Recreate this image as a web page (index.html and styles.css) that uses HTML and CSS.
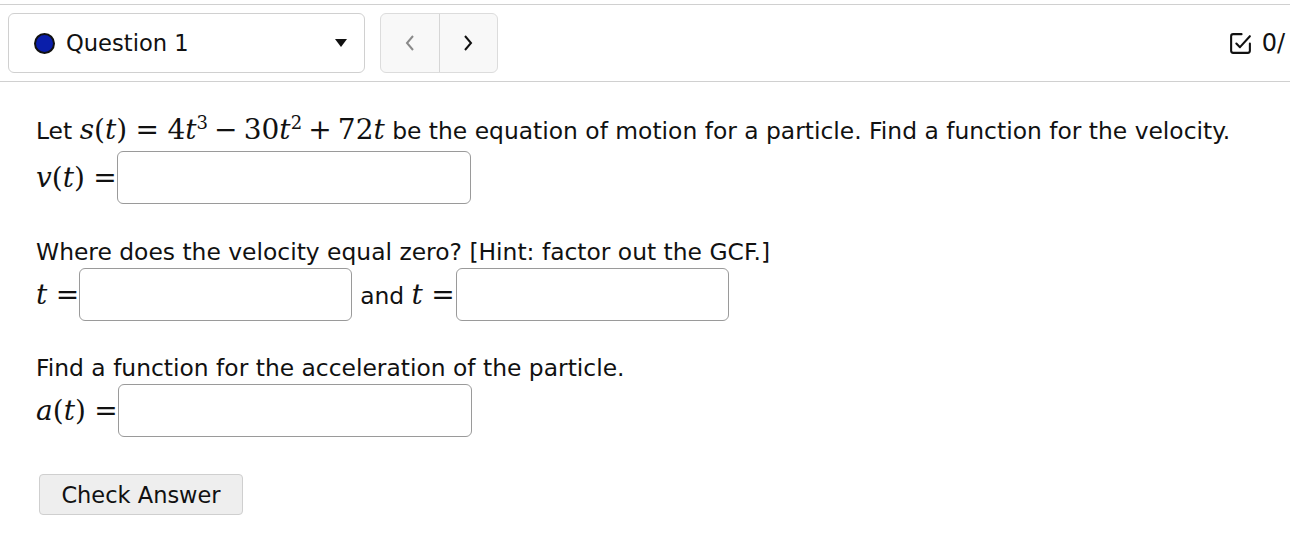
FILE: index.html
```html
<!DOCTYPE html>
<html>
<head>
<meta charset="utf-8">
<link rel="stylesheet" href="styles.css">
</head>
<body>
<div class="header">
  <div class="qselect">
    <span class="dot"></span>
    <span class="qname">Question 1</span>
    <span class="caret"></span>
  </div>
  <div class="nav">
    <div class="navbtn prev">
      <svg width="12" height="20" viewBox="0 0 12 20"><path d="M9 3 L3 10 L9 17" fill="none" stroke="#8a8a8a" stroke-width="2"/></svg>
    </div>
    <div class="navbtn next">
      <svg width="12" height="20" viewBox="0 0 12 20"><path d="M3 3 L9 10 L3 17" fill="none" stroke="#111" stroke-width="2"/></svg>
    </div>
  </div>
  <div class="score">
    <svg class="chk" width="25" height="25" viewBox="0 0 24 24"><path d="M13 3 H5 A2 2 0 0 0 3 5 V19 A2 2 0 0 0 5 21 H19 A2 2 0 0 0 21 19 V12" fill="none" stroke="#111" stroke-width="2" stroke-linecap="round" stroke-linejoin="round"/><path d="M8 12 L11.5 15.5 L21 5" fill="none" stroke="#111" stroke-width="2" stroke-linecap="round" stroke-linejoin="round"/></svg>
    <span class="scoretext">0/</span>
  </div>
</div>

<div class="question">
  <p class="line l1">Let <span class="m"><i>s</i>(<i>t</i>)<span class="rel">=</span>4<i>t</i><sup>3</sup><span class="op">−</span>30<i>t</i><sup>2</sup><span class="op">+</span>72<i>t</i></span> be the equation of motion for a particle. Find a function for the velocity.</p>
  <div class="row r1">
    <span class="m lbl"><i>v</i>(<i>t</i>)<span class="rel end">=</span></span><span class="ans wide"></span>
  </div>

  <p class="line l2">Where does the velocity equal zero? [Hint: factor out the GCF.]</p>
  <div class="row r2">
    <span class="m lbl"><i>t</i><span class="rel end">=</span></span><span class="ans narrow"></span>
    <span class="and">and <span class="m"><i>t</i><span class="rel end">=</span></span></span><span class="ans narrow"></span>
  </div>

  <p class="line l3">Find a function for the acceleration of the particle.</p>
  <div class="row r3">
    <span class="m lbl"><i>a</i>(<i>t</i>)<span class="rel end">=</span></span><span class="ans wide"></span>
  </div>

  <button class="check">Check Answer</button>
</div>
</body>
</html>
```

FILE: styles.css
```css
html, body {
  margin: 0;
  padding: 0;
  background: #fff;
  color: #111;
  font-family: "DejaVu Sans", sans-serif;
}

.header {
  margin-top: 4px;
  border-top: 1px solid #d0d0d0;
  border-bottom: 1px solid #d0d0d0;
  display: flex;
  align-items: center;
  padding: 8px 0 8px 8px;
  overflow: hidden;
}

.qselect {
  box-sizing: border-box;
  width: 357px;
  height: 60px;
  border: 1px solid #d0d0d0;
  border-radius: 6px;
  display: flex;
  align-items: center;
  padding-left: 25px;
  padding-right: 17px;
}

.dot {
  box-sizing: border-box;
  width: 21px;
  height: 21px;
  border-radius: 50%;
  background: #0a1eaa;
  border: 2px solid #111;
  margin-right: 11px;
}

.qname {
  font-size: 22.6px;
  flex: 1;
}

.caret {
  width: 0;
  height: 0;
  border-left: 6px solid transparent;
  border-right: 6px solid transparent;
  border-top: 8px solid #111;
}

.nav {
  margin-left: 15px;
  display: flex;
  box-sizing: border-box;
  width: 118px;
  height: 60px;
  border: 1px solid #dcdcdc;
  border-radius: 6px;
  background: #f8f8f8;
  overflow: hidden;
}

.navbtn {
  flex: 1;
  display: flex;
  align-items: center;
  justify-content: center;
}

.navbtn.prev {
  border-right: 1px solid #d6d6d6;
}

.score {
  margin-left: auto;
  display: flex;
  align-items: center;
}

.chk {
  margin-right: 9px;
}

.scoretext {
  font-size: 24px;
  margin-right: 5px;
}

.question {
  padding: 33px 0 0 36px;
}

.line {
  margin: 0;
  font-size: 23.4px;
  line-height: 30px;
}

.row {
  display: flex;
  align-items: center;
  font-size: 23.4px;
}

.r1 { margin-top: 5px; }
.l2 { margin-top: 33px; }
.r2 { margin-top: 1px; }
.l3 { margin-top: 32px; }
.r3 { margin-top: 1px; }

.m {
  font-family: "DejaVu Serif", "Liberation Serif", serif;
  font-size: 28px;
}

.m i {
  font-style: italic;
}

.m sup {
  font-size: 18px;
  line-height: 0;
  vertical-align: 0.55em;
}

.rel {
  margin: 0 0.3em;
}

.rel.end {
  margin-right: 0;
}

.op {
  margin: 0 0.22em;
}

.lbl {
  white-space: nowrap;
}

.ans {
  box-sizing: border-box;
  height: 53px;
  border: 1px solid #9a9a9a;
  border-radius: 6px;
  background: #fff;
  display: inline-block;
}

.ans.wide {
  width: 354px;
}

.ans.narrow {
  width: 273px;
}

.and {
  margin: 0 1px 0 8px;
  white-space: nowrap;
}

.check {
  margin-top: 37px;
  margin-left: 3px;
  box-sizing: border-box;
  width: 204px;
  height: 41px;
  background: #eeeeee;
  border: 1px solid #cfcfcf;
  border-radius: 4px;
  font-family: "DejaVu Sans", sans-serif;
  font-size: 22.5px;
  color: #111;
  padding: 0;
}
```
